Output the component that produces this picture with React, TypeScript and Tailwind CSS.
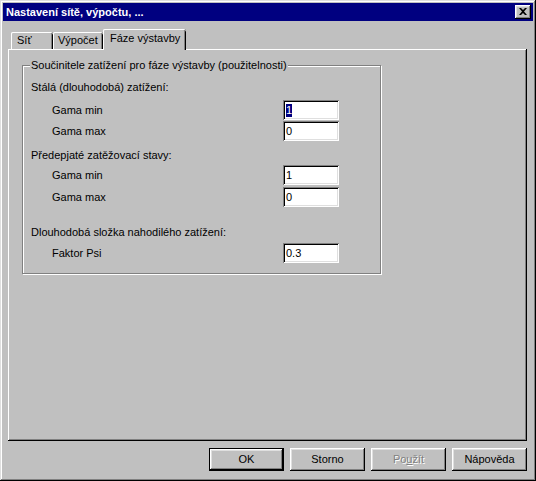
import React from "react";

const raised =
  "shadow-[inset_-1px_-1px_0_#000,inset_1px_1px_0_#fff,inset_-2px_-2px_0_#808080,inset_2px_2px_0_#dfdfdf]";
const sunken =
  "shadow-[inset_1px_1px_0_#808080,inset_-1px_-1px_0_#fff,inset_2px_2px_0_#000,inset_-2px_-2px_0_#dfdfdf]";

interface FieldProps {
  label: string;
  value: string;
  selected?: boolean;
  className?: string;
}

const Field: React.FC<FieldProps> = ({ label, value, selected, className }) => (
  <div className={`flex items-center h-[20px] pl-[29px] ${className ?? ""}`}>
    <span className="w-[231px]">{label}</span>
    <div className={`w-[56px] h-[20px] bg-white flex items-center pl-[3px] ${sunken}`}>
      {selected ? (
        <span className="bg-[#000080] text-white leading-[13px]">{value}</span>
      ) : (
        <span className="leading-[13px]">{value}</span>
      )}
    </div>
  </div>
);

const Heading: React.FC<{ text: string; className?: string }> = ({ text, className }) => (
  <div className={`h-[20px] flex items-center pl-[8px] ${className ?? ""}`}>{text}</div>
);

const tabs = [
  { name: "Síť", w: "w-[42px]", pl: "pl-[6px]" },
  { name: "Výpočet", w: "w-[50px]", pl: "pl-[5px]" },
];

const Button: React.FC<{ children: React.ReactNode; isDefault?: boolean; disabled?: boolean }> = ({
  children,
  isDefault,
  disabled,
}) => (
  <div className={`w-[75px] h-[23px] ${isDefault ? "border border-black" : ""}`}>
    <div
      className={`w-full h-full flex items-center justify-center ${raised} ${
        disabled ? "text-[#808080] [text-shadow:1px_1px_0_#fff]" : ""
      }`}
    >
      {children}
    </div>
  </div>
);

export default function App() {
  return (
    <div
      className={`w-[536px] h-[481px] bg-[#c0c0c0] p-[3px] flex flex-col text-black text-[11px] leading-[13px] font-['Liberation_Sans',Arial,sans-serif] shadow-[inset_-1px_-1px_0_#000,inset_1px_1px_0_#dfdfdf,inset_-2px_-2px_0_#808080,inset_2px_2px_0_#fff]`}
    >
      {/* title bar */}
      <div className="h-[18px] bg-[#000080] flex items-center justify-between pl-[3px] pr-[2px]">
        <span className="text-white font-bold">Nastavení sítě, výpočtu, ...</span>
        <div className={`w-[16px] h-[14px] bg-[#c0c0c0] flex items-center justify-center ${raised}`}>
          <svg width="8" height="7" viewBox="0 0 8 7" className="mb-[1px]">
            <path d="M0 0h2l2 2 2-2h2L5 3.5 8 7H6L4 5 2 7H0l3-3.5z" fill="#000" />
          </svg>
        </div>
      </div>

      {/* tabs */}
      <div className="mt-[8px] ml-[5px] w-[519px] h-[20px] flex items-end pl-[3px]">
        {tabs.map((t) => (
          <div
            key={t.name}
            className={`${t.w} h-[17px] ${t.pl} flex items-center rounded-t-[2px] shadow-[inset_1px_0_0_#fff,inset_0_1px_0_#fff,inset_-1px_0_0_#000,inset_-2px_0_0_#808080]`}
          >
            {t.name}
          </div>
        ))}
        <div className="relative z-10 w-[83px] h-[21px] -mb-px pl-[7px] pb-[3px] flex items-center bg-[#c0c0c0] rounded-t-[2px] shadow-[inset_1px_0_0_#fff,inset_0_1px_0_#fff,inset_-1px_0_0_#000,inset_-2px_0_0_#808080]">
          Fáze výstavby
        </div>
      </div>

      {/* panel */}
      <div className="ml-[5px] w-[519px] h-[392px] pl-[14px] pt-[16px] shadow-[inset_-1px_-1px_0_#000,inset_1px_1px_0_#fff,inset_-2px_-2px_0_#808080]">
        <div className="relative w-[359px] border border-[#808080] shadow-[inset_1px_1px_0_#fff,1px_1px_0_#fff] pb-[10px]">
          <span className="absolute left-[7px] -top-[7px] px-[1px] bg-[#c0c0c0]">
            Součinitele zatížení pro fáze výstavby (použitelnosti)
          </span>
          <Heading text="Stálá (dlouhodobá) zatížení:" className="mt-[11px]" />
          <Field label="Gama min" value="1" selected className="mt-[3px]" />
          <Field label="Gama max" value="0" className="mt-[1px]" />
          <Heading text="Předepjaté zatěžovací stavy:" className="mt-[4px]" />
          <Field label="Gama min" value="1" />
          <Field label="Gama max" value="0" className="mt-[2px]" />
          <Heading text="Dlouhodobá složka nahodilého zatížení:" className="mt-[15px]" />
          <Field label="Faktor Psi" value="0.3" className="mt-[1px]" />
        </div>
      </div>

      {/* buttons */}
      <div className="ml-[5px] w-[519px] mt-[7px] flex justify-end gap-[6px]">
        <Button isDefault>OK</Button>
        <Button>Storno</Button>
        <Button disabled>
          Po<span className="underline">u</span>žít
        </Button>
        <Button>Nápověda</Button>
      </div>
    </div>
  );
}
